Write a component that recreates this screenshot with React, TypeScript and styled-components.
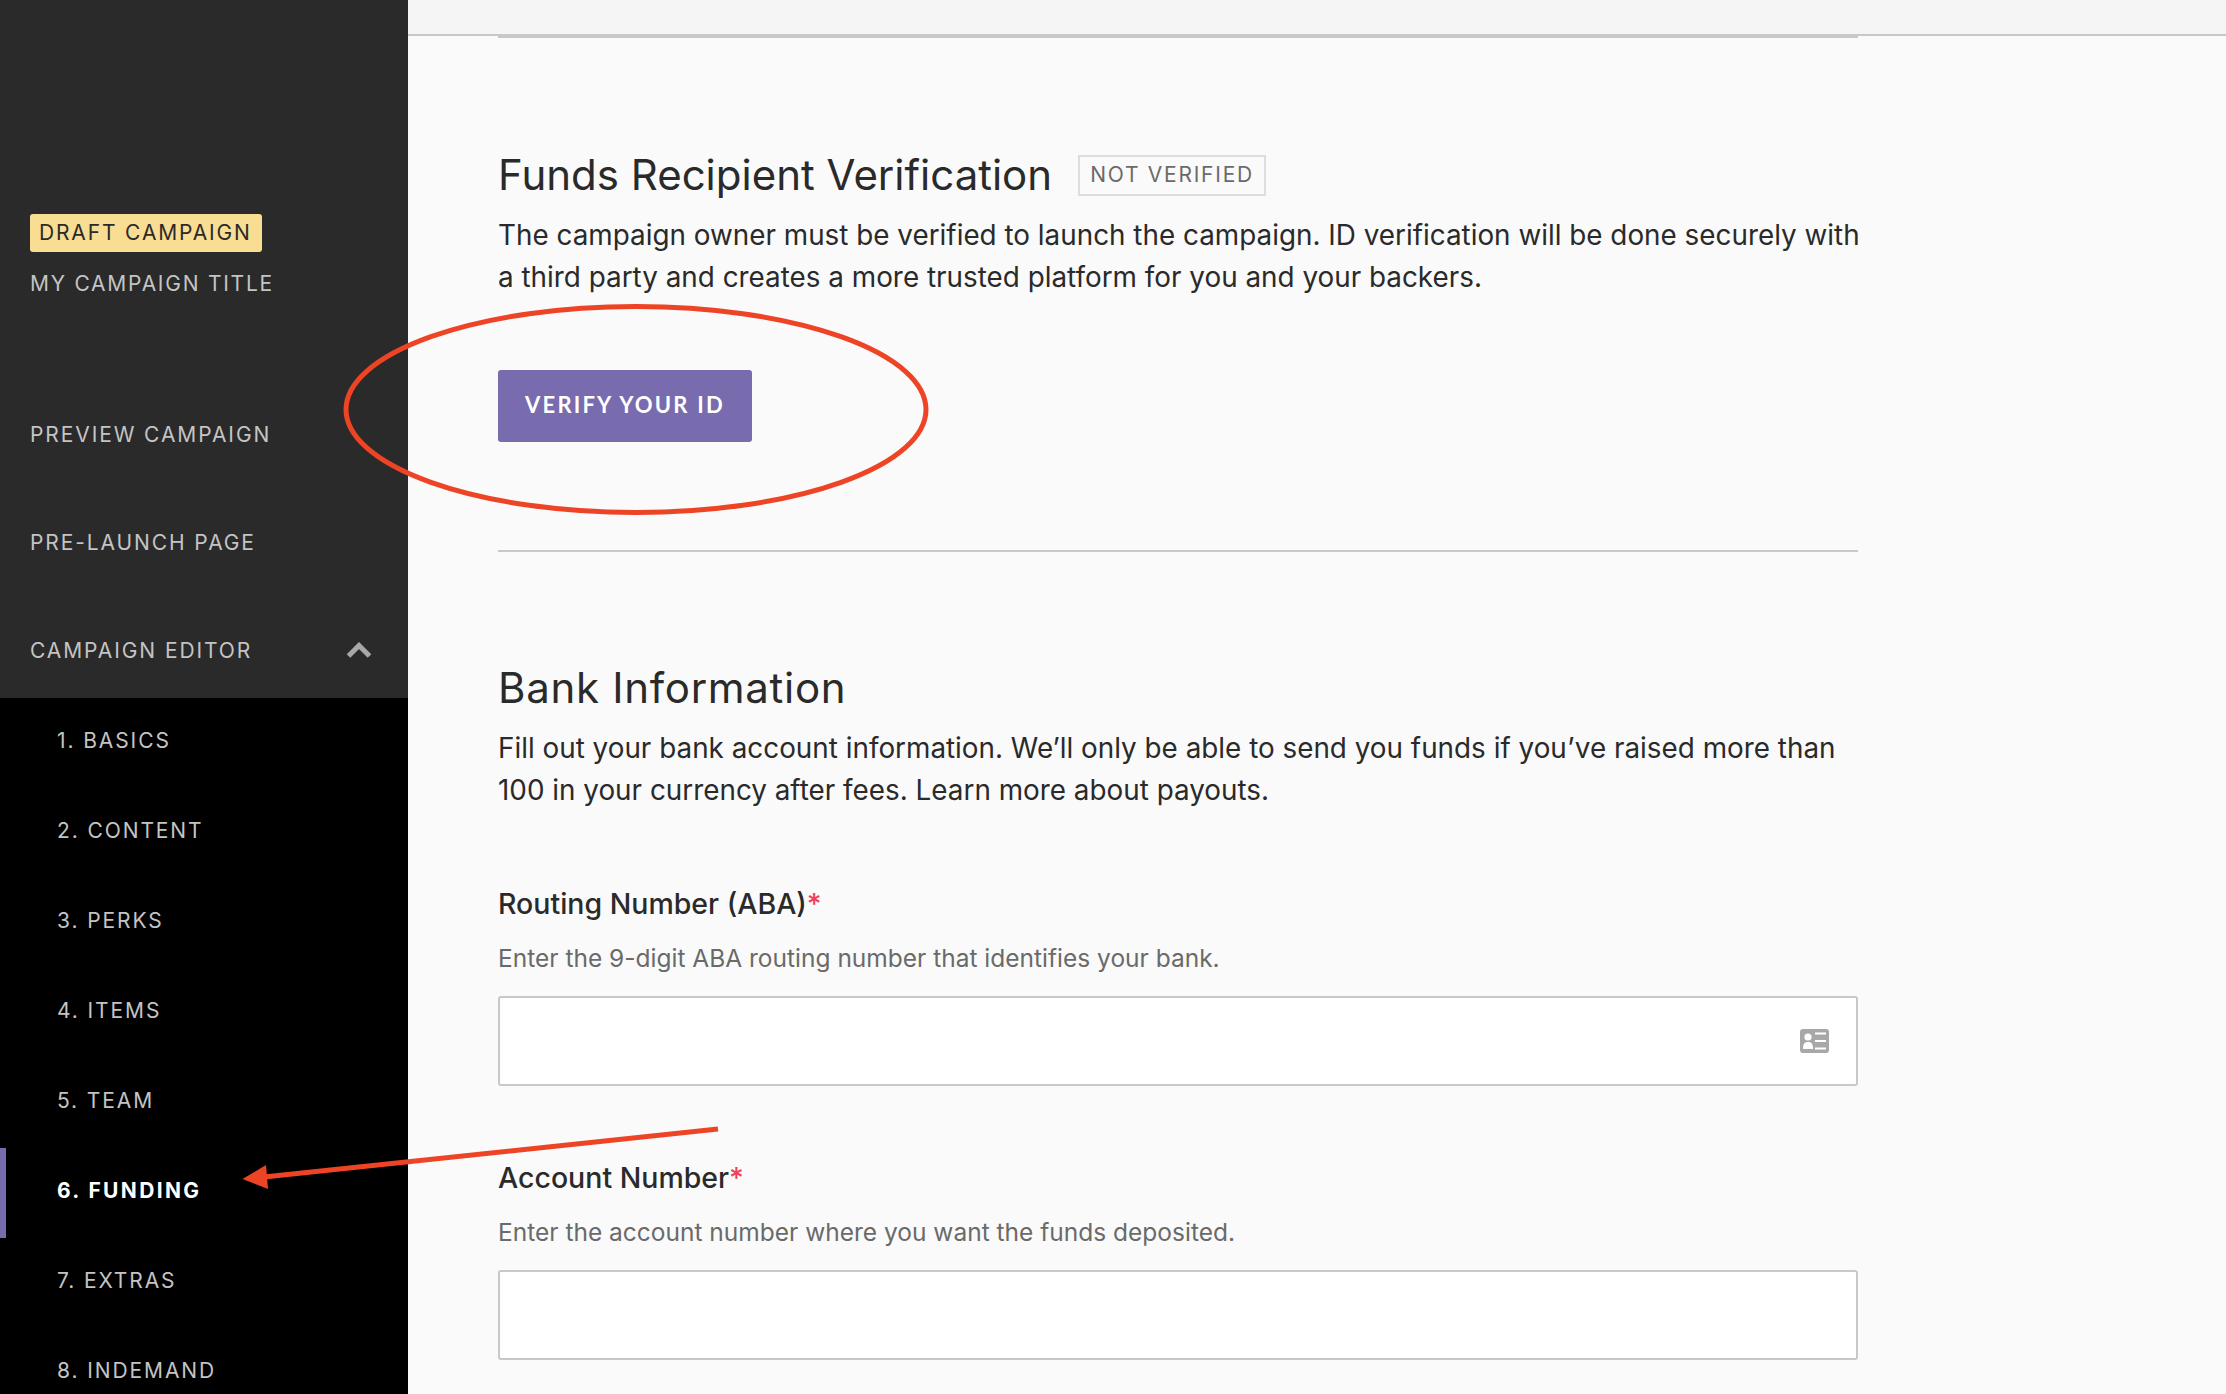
import React from 'react';
import styled, { createGlobalStyle } from 'styled-components';

const GlobalStyle = createGlobalStyle`
    html, body {
        margin: 0;
        padding: 0;
        background: #fafafa;
    }
    body {
        font-family: 'Inter', 'Liberation Sans', sans-serif;
        color: #2a2a2a;
    }
`;

const Page = styled.div`
    position: relative;
    display: flex;
    width: 2226px;
    height: 1394px;
    overflow: hidden;
`;

const Sidebar = styled.aside`
    width: 408px;
    flex-shrink: 0;
    background: #2a2a2a;
    padding-top: 214px;
    box-sizing: border-box;
`;

const CampaignInfo = styled.div`
    padding: 0 30px;
    height: 166px;
`;

const DraftBadge = styled.span`
    display: inline-block;
    height: 38px;
    line-height: 38px;
    padding: 0 10px 0 9px;
    background: #f9dd92;
    border-radius: 3px;
    color: #2a2a2a;
    font-size: 21px;
    letter-spacing: 1.85px;
`;

const CampaignTitle = styled.div`
    margin-top: 13px;
    font-size: 21px;
    line-height: 38px;
    letter-spacing: 1.75px;
    color: #c4c4c4;
`;

const NavRow = styled.div`
    height: 108px;
    padding: 0 36px 0 30px;
    box-sizing: border-box;
    display: flex;
    align-items: center;
    justify-content: space-between;
    font-size: 21px;
    letter-spacing: 1.9px;
    color: #c4c4c4;
`;

const EditorRow = styled(NavRow)`
    height: 102px;
    padding-top: 6px;
`;

const SubNav = styled.nav`
    background: #000;
    height: 720px;
`;

const SubItem = styled.div<{ $active?: boolean }>`
    height: 90px;
    box-sizing: border-box;
    padding: 0 0 6px ${p => (p.$active ? 51 : 57)}px;
    display: flex;
    align-items: center;
    border-left: ${p => (p.$active ? '6px solid #786bae' : 'none')};
    font-size: 21px;
    letter-spacing: ${p => (p.$active ? 2.35 : 1.9)}px;
    font-weight: ${p => (p.$active ? 700 : 400)};
    color: ${p => (p.$active ? '#fff' : '#c4c4c4')};
`;

const Main = styled.main`
    flex: 1;
    min-width: 0;
`;

const TopBar = styled.div`
    height: 34px;
    background: #f5f5f5;
    border-bottom: 2px solid #c8c8c8;
`;

const Content = styled.div`
    width: 1360px;
    margin-left: 90px;
`;

const Rule = styled.hr<{ $top?: number }>`
    height: 2px;
    margin: ${p => p.$top ?? 0}px 0 0;
    border: 0;
    background: #c8c8c8;
`;

const HeadingRow = styled.div`
    display: flex;
    align-items: center;
    gap: 26px;
    margin-top: 109px;
`;

const Heading = styled.h2<{ $top?: number; $tracking?: number }>`
    margin: ${p => p.$top ?? 0}px 0 0;
    font-size: 42px;
    line-height: 56px;
    font-weight: 400;
    letter-spacing: ${p => p.$tracking ?? 0}px;
`;

const StatusTag = styled.span`
    box-sizing: border-box;
    height: 41px;
    line-height: 36px;
    padding: 0 10px;
    border: 2px solid #ddd;
    color: #6a6a6a;
    font-size: 21px;
    letter-spacing: 1.75px;
`;

const Body = styled.p`
    margin: 11px 0 0;
    font-size: 27.85px;
    line-height: 42px;
    white-space: nowrap;
`;

const VerifyButton = styled.button`
    display: block;
    width: 254px;
    height: 72px;
    margin-top: 72px;
    padding: 0 0 3px;
    border: 0;
    border-radius: 3px;
    background: #786bae;
    color: #fff;
    font-family: 'Lato', sans-serif;
    font-weight: 700;
    font-size: 22px;
    letter-spacing: 2.2px;
`;

const Field = styled.div<{ $top: number }>`
    display: flex;
    flex-direction: column;
    margin-top: ${p => p.$top}px;
`;

const Label = styled.label`
    font-size: 28.5px;
    line-height: 40px;
    font-weight: 500;
`;

const Required = styled.span`
    color: #f0405a;
`;

const Help = styled.div`
    margin-top: 17px;
    font-size: 24.5px;
    line-height: 34px;
    color: #6a6a6a;
`;

const InputBox = styled.div`
    box-sizing: border-box;
    height: 90px;
    margin-top: 21px;
    padding-right: 27px;
    display: flex;
    align-items: center;
    justify-content: flex-end;
    background: #fff;
    border: 2px solid #c8c8c8;
    border-radius: 3px;
`;

const Annotation = styled.svg`
    position: absolute;
    left: 0;
    top: 0;
    pointer-events: none;
`;

const steps = ['1. BASICS', '2. CONTENT', '3. PERKS', '4. ITEMS', '5. TEAM', '6. FUNDING', '7. EXTRAS', '8. INDEMAND'];

const App: React.FC = () => {
    return (
        <Page>
            <GlobalStyle />
            <Sidebar>
                <CampaignInfo>
                    <DraftBadge>DRAFT CAMPAIGN</DraftBadge>
                    <CampaignTitle>MY CAMPAIGN TITLE</CampaignTitle>
                </CampaignInfo>
                <NavRow>PREVIEW CAMPAIGN</NavRow>
                <NavRow>PRE-LAUNCH PAGE</NavRow>
                <EditorRow>
                    CAMPAIGN EDITOR
                    <svg width="26" height="16" viewBox="0 0 26 16">
                        <path d="M2.5 14 L13 3.5 L23.5 14" fill="none" stroke="#a8a8a8" strokeWidth="5" />
                    </svg>
                </EditorRow>
                <SubNav>
                    {steps.map(step => (
                        <SubItem key={step} $active={step === '6. FUNDING'}>
                            {step}
                        </SubItem>
                    ))}
                </SubNav>
            </Sidebar>
            <Main>
                <TopBar />
                <Content>
                    <Rule />
                    <HeadingRow>
                        <Heading>Funds Recipient Verification</Heading>
                        <StatusTag>NOT VERIFIED</StatusTag>
                    </HeadingRow>
                    <Body>
                        The campaign owner must be verified to launch the campaign. ID verification will be done securely with<br />
                        a third party and creates a more trusted platform for you and your backers.
                    </Body>
                    <VerifyButton>VERIFY YOUR ID</VerifyButton>
                    <Rule $top={108} />
                    <Heading $top={108} $tracking={0.7}>Bank Information</Heading>
                    <Body>
                        Fill out your bank account information. We’ll only be able to send you funds if you’ve raised more than<br />
                        100 in your currency after fees. Learn more about payouts.
                    </Body>
                    <Field $top={73}>
                        <Label>Routing Number (ABA)<Required>*</Required></Label>
                        <Help>Enter the 9-digit ABA routing number that identifies your bank.</Help>
                        <InputBox>
                            <svg width="29" height="24" viewBox="0 0 29 24">
                                <rect width="29" height="24" rx="3" fill="#a8a8a8" />
                                <circle cx="8" cy="8" r="3.6" fill="#fff" />
                                <path d="M3 20 C3 14 5 13 8 13 C11 13 13 14 13 20 Z" fill="#fff" />
                                <path d="M15 4.5 H26 M15 12 H26 M15 19.5 H26" stroke="#fff" strokeWidth="2.2" />
                            </svg>
                        </InputBox>
                    </Field>
                    <Field $top={72}>
                        <Label>Account Number<Required>*</Required></Label>
                        <Help>Enter the account number where you want the funds deposited.</Help>
                        <InputBox />
                    </Field>
                </Content>
            </Main>
            <Annotation width="2226" height="1394" viewBox="0 0 2226 1394">
                <ellipse cx="636" cy="409.5" rx="290" ry="103" fill="none" stroke="#ee4426" strokeWidth="5" />
                <path d="M718 1129 L264 1177" fill="none" stroke="#ee4426" strokeWidth="5" />
                <path d="M242.5 1179 L266 1165 L268 1189 Z" fill="#ee4426" />
            </Annotation>
        </Page>
    );
};

export default App;
